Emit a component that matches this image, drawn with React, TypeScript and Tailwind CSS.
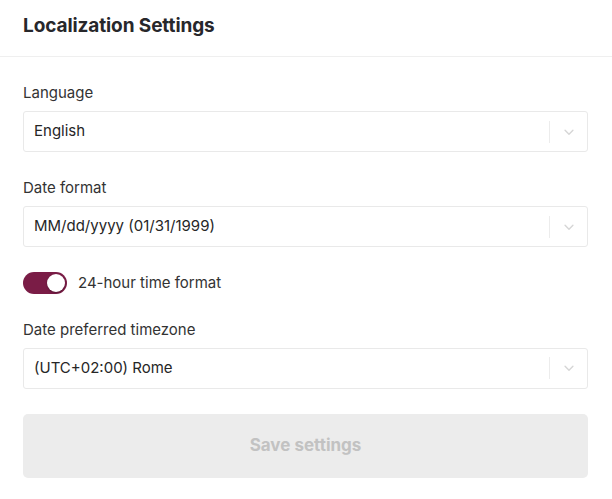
import { useState } from "react";

type Field = { label: string; value: string };

function Select({ value }: { value: string }) {
  return (
    <div className="flex h-[41px] items-center rounded-[3px] border border-[#e9e9e9] bg-white">
      <span className="flex-1 pl-[10px] text-[15px] text-[#262626]">{value}</span>
      <span className="h-[22px] w-px bg-[#ececec]" />
      <span className="flex w-[37px] items-center justify-center">
        <svg className="h-[14px] w-[14px] text-[#d6d6d6]" fill="none" stroke="currentColor" strokeWidth={1.6} viewBox="0 0 16 16">
          <path strokeLinecap="round" strokeLinejoin="round" d="M3.5 6l4.5 4.5L12.5 6" />
        </svg>
      </span>
    </div>
  );
}

function LabeledSelect({ label, value }: Field) {
  return (
    <div>
      <label className="mb-2 block h-5 text-[15px] leading-5 text-[#333]">{label}</label>
      <Select value={value} />
    </div>
  );
}

export default function App() {
  const [on, setOn] = useState(true);

  return (
    <div className="min-h-[499px] w-full bg-white" style={{ fontFamily: "Inter, 'Noto Sans', sans-serif" }}>
      <div className="flex h-[57px] items-center border-b border-[#efefef] pb-[3px] pl-[23px]">
        <h1 className="text-[19px] font-bold tracking-[-0.1px] text-[#27272b]">Localization Settings</h1>
      </div>

      <div className="flex flex-col gap-[25px] pl-[23px] pr-6 pt-[26px]">
        <div className="mb-px">
          <LabeledSelect label="Language" value="English" />
        </div>
        <LabeledSelect label="Date format" value="MM/dd/yyyy (01/31/1999)" />

        <div className="flex items-center gap-[11px]">
          <button
            type="button"
            onClick={() => setOn(!on)}
            className={`relative h-[22px] w-[44px] rounded-full transition ${on ? "bg-[#7a1c46]" : "bg-[#d9d9d9]"}`}
          >
            <span
              className={`absolute top-[2px] h-[18px] w-[18px] rounded-full bg-white shadow-[0_1px_2px_rgba(0,0,0,0.3)] transition-all ${on ? "left-[24px]" : "left-[2px]"}`}
            />
          </button>
          <span className="text-[15px] text-[#333]">24-hour time format</span>
        </div>

        <LabeledSelect label="Date preferred timezone" value="(UTC+02:00) Rome" />

        <button
          type="button"
          disabled
          className="h-[64px] w-full rounded-[5px] bg-[#ececec] text-[17px] font-bold text-[#c2c2c2]"
        >
          Save settings
        </button>
      </div>
    </div>
  );
}
